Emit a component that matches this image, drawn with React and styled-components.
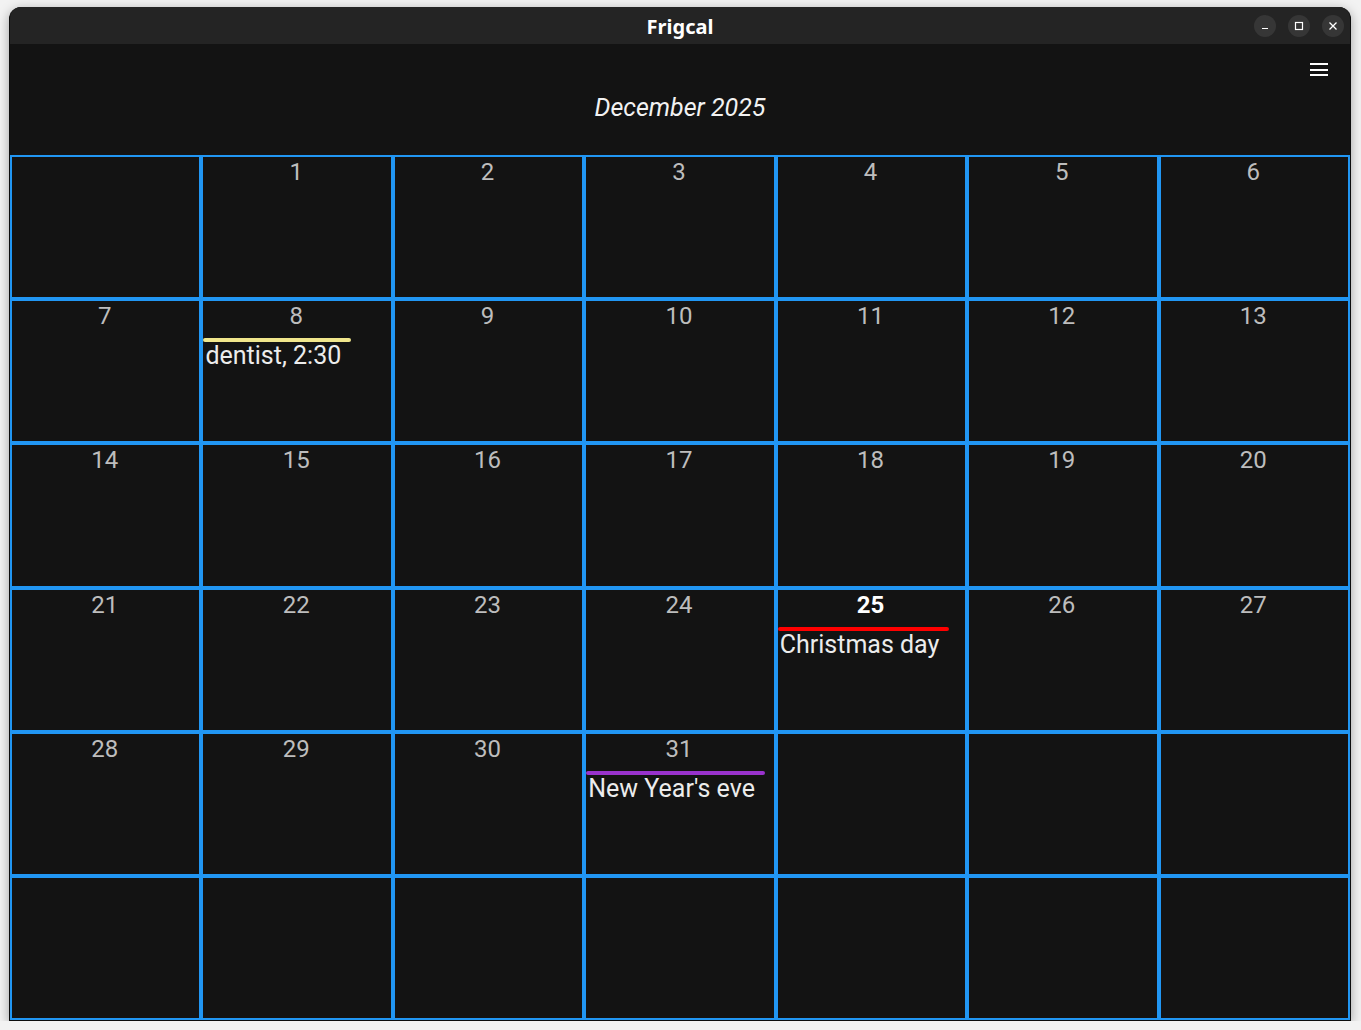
import React from 'react';
import styled, { createGlobalStyle } from 'styled-components';

const BLUE = '#2196f3';

const GlobalStyle = createGlobalStyle`
  html, body {
    margin: 0;
    padding: 0;
    background: #f2f2f2;
  }
  body {
    font-family: Roboto, 'Noto Sans', sans-serif;
  }
`;

const Window = styled.div`
  box-sizing: border-box;
  margin: 7px 0 0 9px;
  width: 1342px;
  height: 1014px;
  display: flex;
  flex-direction: column;
  background: #131313;
  border: 1px solid #0c0c0c;
  border-top: none;
  border-radius: 12px 12px 0 0;
  box-shadow: 0 3px 12px rgba(0, 0, 0, 0.35);
  overflow: hidden;
`;

const TitleBar = styled.div`
  height: 37px;
  flex: none;
  display: grid;
  grid-template-columns: 1fr auto 1fr;
  align-items: center;
  background: #242424;
`;

const Title = styled.div`
  grid-column: 2;
  padding-top: 1px;
  font-family: 'Noto Sans', 'DejaVu Sans', sans-serif;
  font-weight: 700;
  font-size: 20px;
  color: #ffffff;
`;

const Controls = styled.div`
  grid-column: 3;
  justify-self: end;
  display: flex;
  gap: 12px;
  padding-right: 6px;
`;

const CtrlButton = styled.div`
  width: 22px;
  height: 22px;
  border-radius: 50%;
  background: #363636;
  display: flex;
  align-items: center;
  justify-content: center;
`;

const Header = styled.div`
  flex: none;
  height: 111px;
  box-sizing: border-box;
  padding: 19px 22px 0 0;
  display: flex;
  flex-direction: column;
`;

const Menu = styled.div`
  align-self: flex-end;
  width: 18px;
  height: 13px;
  display: flex;
  flex-direction: column;
  justify-content: space-between;
  span {
    display: block;
    height: 2px;
    background: #ffffff;
  }
`;

const Month = styled.div`
  margin-top: 17px;
  padding-left: 22px;
  text-align: center;
  font-style: italic;
  font-size: 25px;
  line-height: 30px;
  color: #f2f2f2;
`;

const Grid = styled.div`
  flex: 1;
  display: grid;
  grid-template-columns: repeat(7, 1fr);
  grid-template-rows: repeat(6, 1fr);
`;

const Cell = styled.div`
  border: 2px solid ${BLUE};
  min-width: 0;
  display: flex;
  flex-direction: column;
  align-items: flex-start;
`;

const DayNum = styled.div`
  align-self: stretch;
  padding: 2px 2px 0 0;
  text-align: center;
  font-size: 24px;
  line-height: 27px;
  font-weight: ${(p) => (p.$today ? 700 : 400)};
  color: ${(p) => (p.$today ? '#ffffff' : '#bdbdbd')};
`;

const Event = styled.div`
  margin-top: 8px;
  display: inline-flex;
  flex-direction: column;
  padding-right: 10px;
`;

const EventBar = styled.div`
  height: 4px;
  border-radius: 2px;
  background: ${(p) => p.$color};
  margin-right: -10px;
`;

const EventLabel = styled.div`
  padding-left: 2px;
  font-size: 25px;
  line-height: 28px;
  color: #ececec;
  white-space: nowrap;
`;

const events = {
  8: { text: 'dentist, 2:30', color: '#f0e68c' },
  25: { text: 'Christmas day', color: '#ff0000' },
  31: { text: "New Year's eve", color: '#9932cc' },
};

// Dec 1 2025 is a Monday, first column is Sunday
const cells = Array.from({ length: 42 }, (_, i) => (i >= 1 && i <= 31 ? i : null));

export default function App() {
  return (
    <>
      <GlobalStyle />
      <Window>
        <TitleBar>
          <Title>Frigcal</Title>
          <Controls>
            <CtrlButton>
              <svg width="10" height="10" viewBox="0 0 10 10">
                <path d="M2 7.5h6" stroke="#fff" strokeWidth="1.2" />
              </svg>
            </CtrlButton>
            <CtrlButton>
              <svg width="10" height="10" viewBox="0 0 10 10">
                <rect x="1.5" y="1.5" width="7" height="7" fill="none" stroke="#fff" strokeWidth="1.2" />
              </svg>
            </CtrlButton>
            <CtrlButton>
              <svg width="10" height="10" viewBox="0 0 10 10">
                <path d="M1.5 1.5l7 7M8.5 1.5l-7 7" stroke="#fff" strokeWidth="1.3" />
              </svg>
            </CtrlButton>
          </Controls>
        </TitleBar>
        <Header>
          <Menu>
            <span />
            <span />
            <span />
          </Menu>
          <Month>December 2025</Month>
        </Header>
        <Grid>
          {cells.map((d, i) => (
            <Cell key={i}>
              {d && <DayNum $today={d === 25}>{d}</DayNum>}
              {d && events[d] && (
                <Event>
                  <EventBar $color={events[d].color} />
                  <EventLabel>{events[d].text}</EventLabel>
                </Event>
              )}
            </Cell>
          ))}
        </Grid>
      </Window>
    </>
  );
}
